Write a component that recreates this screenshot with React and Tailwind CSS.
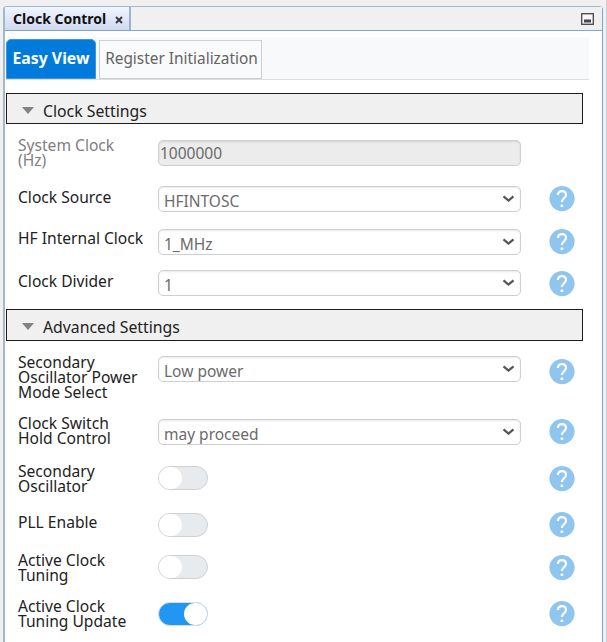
const clockRows = [
  { label: ["System Clock", "(Hz)"], value: "1000000", kind: "input", row: "h-[48px]", lt: "mt-0", ct: "mt-[2px]", it: "" },
  { label: ["Clock Source"], value: "HFINTOSC", kind: "select", row: "h-[43px]", lt: "mt-[4px]", ct: "mt-0", it: "mt-0" },
  { label: ["HF Internal Clock"], value: "1_MHz", kind: "select", row: "h-[41px]", lt: "mt-[2px]", ct: "mt-0", it: "mt-0" },
  { label: ["Clock Divider"], value: "1", kind: "select", row: "h-[39px]", lt: "mt-[4px]", ct: "mt-0", it: "mt-px" },
];

const advancedRows = [
  { label: ["Secondary", "Oscillator Power", "Mode Select"], value: "Low power", kind: "select", row: "h-[75px]", lt: "mt-[14px]", ct: "mt-[15px]", it: "mt-[18px]" },
  { label: ["Clock Switch", "Hold Control"], value: "may proceed", kind: "select", row: "h-[48px]", lt: "mt-0", ct: "mt-[3px]", it: "mt-[3px]" },
  { label: ["Secondary", "Oscillator"], kind: "toggle", row: "h-[48px]", lt: "mt-0", ct: "mt-[2px]", it: "mt-[2px]" },
  { label: ["PLL Enable"], kind: "toggle", row: "h-[41px]", lt: "mt-[3px]", ct: "mt-[1px]", it: "mt-0" },
  { label: ["Active Clock", "Tuning"], kind: "toggle", row: "h-[46px]", lt: "mt-0", ct: "mt-[2px]", it: "mt-[2px]" },
  { label: ["Active Clock", "Tuning Update"], kind: "toggle", on: true, row: "h-[43px]", lt: "mt-0", ct: "mt-[3px]", it: "mt-[2px]" },
];

function Help({ className }) {
  return (
    <svg className={`ml-[28px] h-[26px] w-[26px] shrink-0 ${className}`} viewBox="0 0 26 26" aria-label="Help">
      <circle cx="13" cy="12.6" r="12.6" fill="#90c5ef" />
      <path d="M8.9 9C9 6.4 10.5 5.1 12.9 5.1c2.5 0 4.1 1.4 4.1 3.7 0 3.2-4.1 3.7-4.1 7.2" fill="none" stroke="#fff" strokeWidth="2.1" />
      <rect x="11.6" y="18.5" width="2.6" height="2.6" rx="0.5" fill="#fff" />
    </svg>
  );
}

function Control({ item }) {
  if (item.kind === "toggle") {
    return (
      <div className={`${item.ct} w-[363px]`}>
        <div className={`flex h-[24px] w-[50px] items-center rounded-full border ${item.on ? "justify-end border-[#d9dcdf] bg-[#2196f3]" : "border-[#cfd1d3] bg-[#e8ebee]"}`}>
          <div className="h-[22px] w-[23px] shrink-0 rounded-full bg-white" />
        </div>
      </div>
    );
  }
  const isInput = item.kind === "input";
  return (
    <div className={`${item.ct} flex h-[26px] w-[363px] items-center justify-between rounded-[5px] border border-[#cfcfcf] text-[15.5px] text-[#6b6b6b] shadow-[inset_0_1px_2px_#00000018] ${isInput ? "bg-[#ececec] pb-px pl-px" : "bg-white pl-[5px] pr-[5px] pt-[3px]"}`}>
      <span className="leading-[20px]">{item.value}</span>
      {!isInput && (
        <svg className="mb-[3px] h-[8px] w-[13px]" viewBox="0 0 13 8">
          <path d="M1.5 1.3L6.5 5.6L11.5 1.3" fill="none" stroke="#555" strokeWidth="2.2" />
        </svg>
      )}
    </div>
  );
}

function Row({ item }) {
  const dim = item.kind === "input";
  return (
    <div className={`flex items-start pl-[13px] ${item.row}`}>
      <div className={`w-[140px] shrink-0 whitespace-nowrap text-[15.6px] leading-[15px] ${item.lt} ${dim ? "text-[#808080]" : "text-[#222]"}`}>
        {item.label.map((line) => (
          <div key={line}>{line}</div>
        ))}
      </div>
      <Control item={item} />
      {!dim && <Help className={item.it} />}
    </div>
  );
}

function SectionHeader({ title, height }) {
  return (
    <div className={`ml-px flex w-[577px] items-center border border-[#1c1c1c] bg-[#f0f0f0] pl-[15px] pt-[4px] ${height}`}>
      <svg className="mb-px h-[7px] w-[12px]" viewBox="0 0 12 7">
        <path d="M0 0H12L6 7Z" fill="#828282" />
      </svg>
      <span className="ml-[9px] text-[15.8px] leading-[20px] text-[#222]">{title}</span>
    </div>
  );
}

export default function App() {
  return (
    <div className="flex h-[642px] w-[607px] overflow-hidden border-r border-[#cfcfcf] bg-[#f0f0f0] pl-[3px] pt-[6px] font-['Noto_Sans','Open_Sans',sans-serif]">
      <div className="flex h-[640px] w-[600px] flex-col rounded-t-[4px] border border-b-0 border-[#9fb9cf] border-l-[2px] border-r-[#7ba3cb] bg-white">
        <div className="flex h-[24px] shrink-0 items-center justify-between border-b border-[#85a6c8] bg-[#f0f0f0] pr-[8px]">
          <div className="flex h-[23px] w-[126px] items-center rounded-tl-[3px] border-r-2 border-[#9db3cc] bg-linear-to-b from-[#f1f5ff] to-[#cfd9f1] pl-[8px]">
            <span className="w-[93px] whitespace-nowrap text-[14px] font-bold text-[#111]">Clock Control</span>
            <svg className="ml-[9px] mt-[2px] h-[8px] w-[8px] shrink-0" viewBox="0 0 8 8">
              <path d="M1 1L7 7M7 1L1 7" stroke="#333" strokeWidth="1.8" />
            </svg>
          </div>
          <svg className="h-[12px] w-[13px]" viewBox="0 0 13 12">
            <rect x="0.7" y="0.7" width="11.6" height="10.6" fill="#f7f7f8" stroke="#44444e" strokeWidth="1.3" />
            <rect x="3" y="6.5" width="7" height="3" fill="#44444e" />
          </svg>
        </div>
        <div className="ml-px mt-[6px] flex h-[43px] w-[583px] shrink-0 items-end border-b border-[#dcdfe2] bg-[#f8f9fb]">
          <div className="flex h-[40px] w-[90px] items-center justify-center rounded-t-[5px] border border-[#3c95dd] bg-[#007bdb] text-[15.8px] font-bold text-white">
            <span className="whitespace-nowrap">Easy View</span>
          </div>
          <div className="ml-[3px] flex h-[39px] w-[163px] items-center justify-center border border-[#cdcfd1] bg-[#f9fafb] pb-px pl-[2px] text-[15.4px] text-[#646464]">
            <span className="whitespace-nowrap">Register Initialization</span>
          </div>
        </div>
        <div className="h-[13px] shrink-0" />
        <SectionHeader title="Clock Settings" height="h-[31px]" />
        <div className="pt-[14px]">
          {clockRows.map((item) => <Row key={item.label.join(" ")} item={item} />)}
        </div>
        <SectionHeader title="Advanced Settings" height="h-[32px]" />
        <div>
          {advancedRows.map((item) => <Row key={item.label.join(" ")} item={item} />)}
        </div>
      </div>
    </div>
  );
}
